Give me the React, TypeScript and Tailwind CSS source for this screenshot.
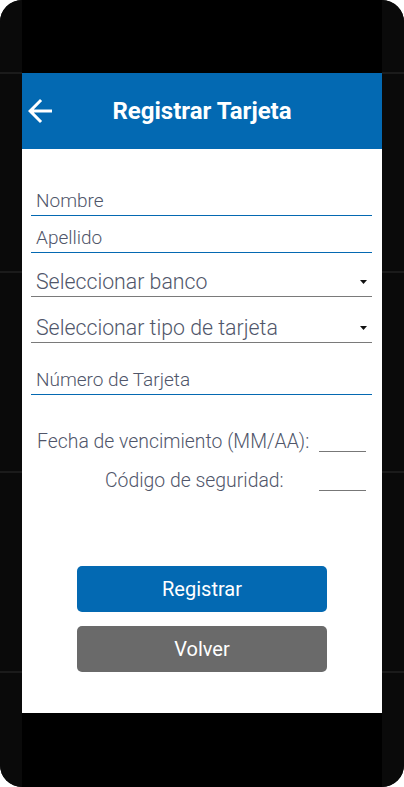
import React from "react";

function SideBar() {
  return (
    <div className="w-[22px] h-full flex flex-col bg-[#0a0a0a]">
      <div className="h-[72px]" />
      <div className="h-[2px] bg-[#1b1b1b]" />
      <div className="h-[197px]" />
      <div className="h-[2px] bg-[#1b1b1b]" />
      <div className="h-[198px]" />
      <div className="h-[2px] bg-[#1b1b1b]" />
      <div className="h-[198px]" />
      <div className="h-[2px] bg-[#1b1b1b]" />
    </div>
  );
}

function TextField({ label, className = "" }: { label: string; className?: string }) {
  return (
    <div className={`border-b border-[#0469b2] pb-[3px] pl-[5px] text-[19px] font-light leading-[22px] text-[#50566a] ${className}`}>
      {label}
    </div>
  );
}

function SelectField({ label, className = "" }: { label: string; className?: string }) {
  return (
    <div className={`flex items-center justify-between border-b border-[#7a7a7a] pb-[2px] pl-[5px] pr-[5px] text-[21.3px] font-light leading-[25px] text-[#50566a] ${className}`}>
      <span>{label}</span>
      <svg width="7" height="4" viewBox="0 0 7 4" className="mt-[1px]">
        <polygon points="0,0 7,0 3.5,4" fill="#111" />
      </svg>
    </div>
  );
}

export default function App() {
  return (
    <div className="w-[404px] h-[787px] bg-white" style={{ fontFamily: "Roboto, 'Noto Sans', sans-serif" }}>
      <div className="w-full h-full rounded-[22px] overflow-hidden flex bg-[#0a0a0a]">
        <SideBar />
        <div className="w-[360px] h-full flex flex-col bg-black">
          <div className="h-[73px]" />
          <div className="h-[76px] bg-[#0369b2] flex items-center text-white">
            <div className="w-[36px] h-[36px] flex items-center justify-center">
              <svg width="36" height="36" viewBox="0 0 24 24" fill="white">
                <path d="M20 11H7.83l5.59-5.59L12 4l-8 8 8 8 1.41-1.41L7.83 13H20v-2z" />
              </svg>
            </div>
            <div className="flex-1 text-center text-[24px] font-bold leading-[28px]">Registrar Tarjeta</div>
            <div className="w-[36px]" />
          </div>
          <div className="h-[564px] bg-white flex flex-col pl-[9px] pr-[10px]">
            <TextField label="Nombre" className="mt-[41px]" />
            <TextField label="Apellido" className="mt-[11px]" />
            <SelectField label="Seleccionar banco" className="mt-[16px]" />
            <SelectField label="Seleccionar tipo de tarjeta" className="mt-[18px]" />
            <TextField label="Número de Tarjeta" className="mt-[26px]" />
            <div className="mt-[36px] flex items-end text-[19.4px] font-light leading-[22px] text-[#50566a]">
              <span className="ml-[6px]">Fecha de vencimiento (MM/AA):</span>
              <div className="ml-auto mr-[6px] mb-[1px] w-[47px] h-px bg-[#777]" />
            </div>
            <div className="mt-[17px] flex items-end text-[19.4px] font-light leading-[22px] text-[#50566a]">
              <span className="ml-[74px]">Código de seguridad:</span>
              <div className="ml-auto mr-[6px] mb-[1px] w-[47px] h-px bg-[#777]" />
            </div>
            <div className="mt-[74px] flex flex-col items-center gap-[14px] pl-[1px]">
              <button className="w-[250px] h-[46px] rounded-[5px] bg-[#0369b2] text-white text-[20px]">Registrar</button>
              <button className="w-[250px] h-[46px] rounded-[5px] bg-[#6a6a6a] text-white text-[20px]">Volver</button>
            </div>
          </div>
          <div className="flex-1" />
        </div>
        <SideBar />
      </div>
    </div>
  );
}
